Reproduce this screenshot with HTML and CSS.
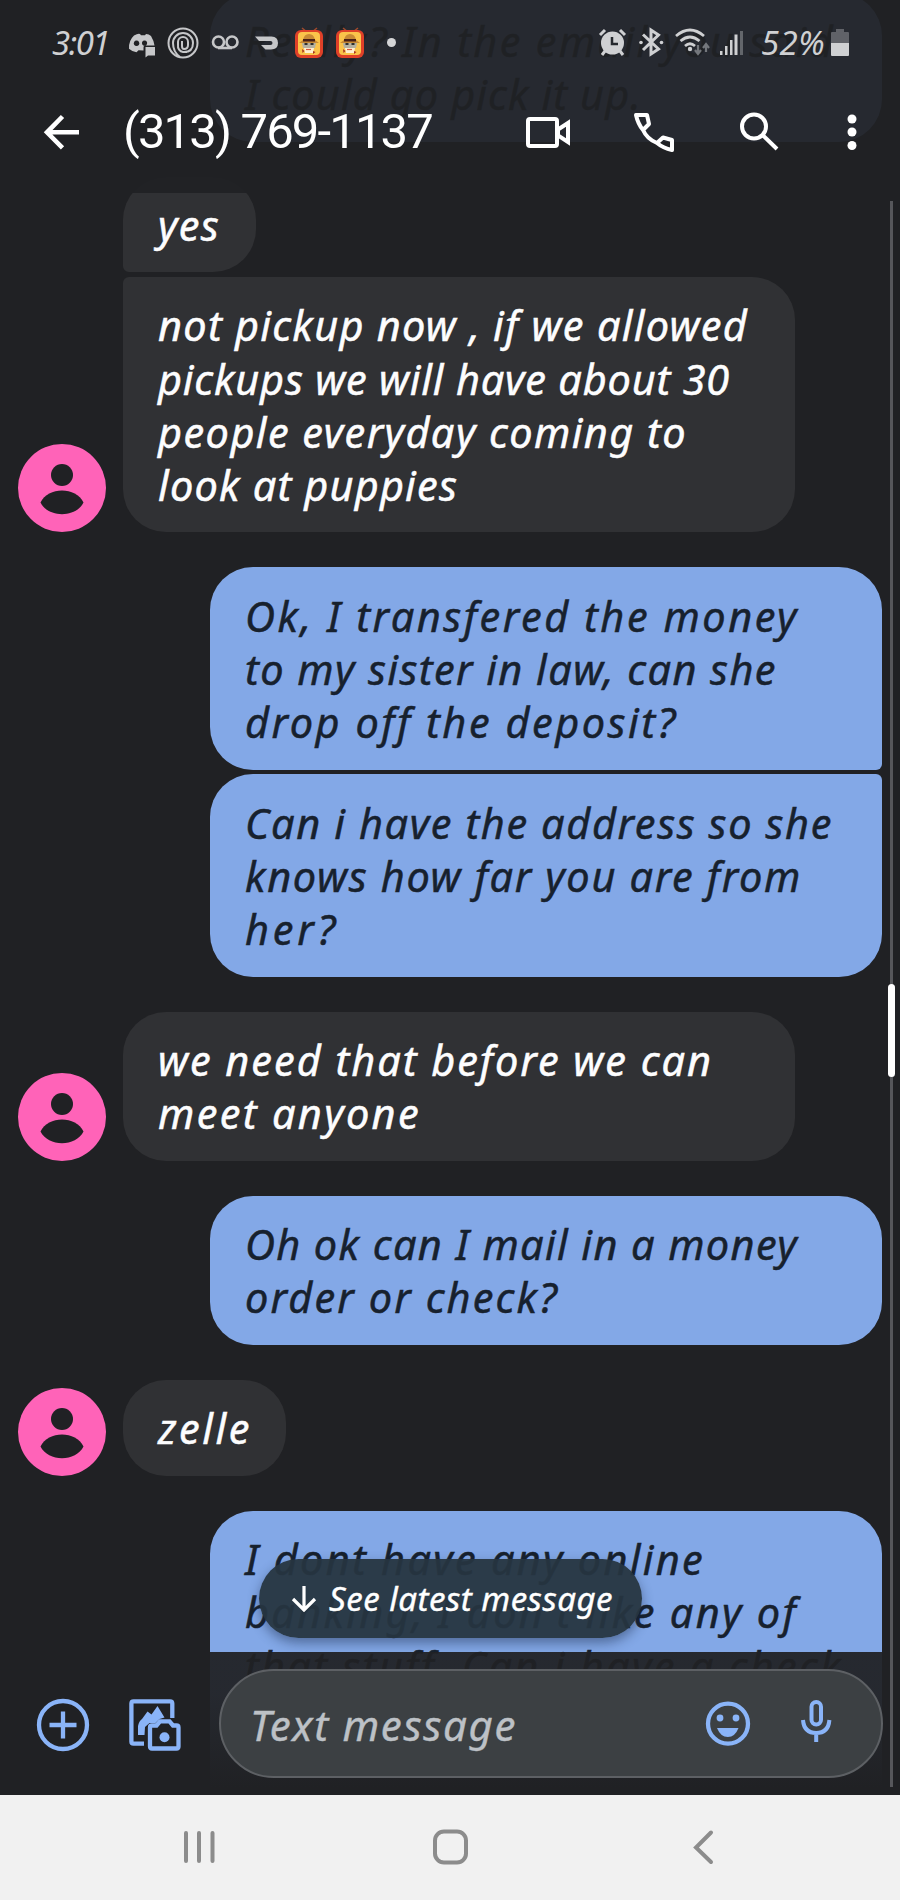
FILE: index.html
```html
<!DOCTYPE html>
<html lang="en">
<head>
<meta charset="utf-8">
<title>Messages</title>
<link rel="stylesheet" href="styles.css">
</head>
<body>
<svg class="defs" aria-hidden="true">
  <symbol id="person" viewBox="0 0 88 88"><circle cx="44" cy="44" r="44" fill="#ff63b8"/><circle cx="44" cy="31" r="11"/><path d="M22.500 58.500C30 42.500 58 42.500 65.500 58.500C58 74 30 74 22.500 58.500Z"/></symbol>
  <symbol id="fox" viewBox="0 0 30 32"><path d="M8 1l5 4M23 1l-5 4" stroke="#a34a2c" stroke-width="1.500"/><rect x="1" y="3" width="28" height="28" rx="6" fill="#df4028"/><rect x="4" y="5" width="22" height="23" rx="4" fill="#fbc34a"/><path d="M9 13Q10 7 15 7t6 6l4 3H5Z" fill="#c98a35"/><path d="M9 12h12v2.500H9z" fill="#4a2016"/><path d="M8 16h14l-1 5H9z" fill="#b5b0a0"/><path d="M10.500 16h3v2h-3zm6 0h3v2h-3z" fill="#30302e"/><path d="M10 21h10l-1 5h-8z" fill="#fff0d2"/><path d="M8 22l2.500 2-2 2zM19 24l2.500 1-2.500 2z" fill="#a83222"/><path d="M12 22.500h5" stroke="#d65a40" stroke-width="1.200"/></symbol>
</svg>
<div class="phone">
  <main class="chat">
    <div class="row sent"><div class="bubble"><span data-w="590">Really? In the email you said</span><span data-w="397">I could go pick it up.</span></div></div>
    <div class="row received"><div class="avatar-space"></div><div class="bubble short tail-down"><span data-w="62">yes</span></div></div>
    <div class="row received grouped"><svg class="avatar"><use href="#person"/></svg><div class="bubble tail-up"><span data-w="590">not pickup now , if we allowed</span><span data-w="572">pickups we will have about 30</span><span data-w="529">people everyday coming to</span><span data-w="300">look at puppies</span></div></div>
    <div class="row sent"><div class="bubble tail-down"><span data-w="554">Ok, I transfered the money</span><span data-w="532">to my sister in law, can she</span><span data-w="433">drop off the deposit?</span></div></div>
    <div class="row sent grouped"><div class="bubble tail-up"><span data-w="588">Can i have the address so she</span><span data-w="557">knows how far you are from</span><span data-w="94">her?</span></div></div>
    <div class="row received"><svg class="avatar"><use href="#person"/></svg><div class="bubble"><span data-w="555">we need that before we can</span><span data-w="263">meet anyone</span></div></div>
    <div class="row sent"><div class="bubble"><span data-w="553">Oh ok can I mail in a money</span><span data-w="314">order or check?</span></div></div>
    <div class="row received"><svg class="avatar"><use href="#person"/></svg><div class="bubble zelle"><span data-w="94">zelle</span></div></div>
    <div class="row sent"><div class="bubble last"><span data-w="460">I dont have any online</span><span data-w="553">banking, I don't like any of</span><span data-w="598">that stuff. Can i have a check</span></div></div>
  </main>

  <header class="top">
    <div class="status">
      <span class="clock" data-w="57">3:01</span>
      <svg class="notifications" viewBox="120 22 290 42">
        <path fill="#c6c7c9" d="M134 35.500q4-2.200 6-1.500l1 1.300h4l1-1.300q3 0 5 2q3 5 3.500 9.500h-9.500q-1.500 0-1.500 2v3l-5-.3-2 2q-5-1-7.500-3.500q-.5-8 5-13.200ZM136.500 40.500a2.800 2.800 0 1 0 .1 0M144.500 40.500a2.600 2.600 0 1 0 .1 0" fill-rule="evenodd"/><path fill="#c6c7c9" d="M145.500 47h9.500v8.500h-7l-2.500 2z"/>
        <g fill="none" stroke="#c6c7c9" stroke-width="2"><circle cx="183" cy="43" r="14.500"/><path d="M180 57Q173 52 173 43a10 10 0 0 1 20 0q0 9-9 9"/><path d="M187 52h-4a5.500 6 0 0 1-5-7v-3a5 5 0 0 1 10 0v3q0 4-4 4q-2 0-2-3v-5"/></g>
        <g fill="none" stroke="#c6c7c9" stroke-width="2.600"><circle cx="218.500" cy="42" r="5.500"/><circle cx="232" cy="42" r="5.500"/><path d="M218 48h14"/></g>
        <path fill="#c6c7c9" d="M255 36.500h16.500q6.500 0 6.500 6.500t-7 6.500h-5.500l-4.500-4.500h9.500q2 0 2-2t-2-2h-11.500z"/>
        <use href="#fox" x="294" y="27" width="30" height="32"/><use href="#fox" x="335" y="27" width="30" height="32"/>
        <circle cx="391.500" cy="42.500" r="4.500" fill="#d4d5d7"/>
      </svg>
      <svg class="signals" viewBox="596 22 150 42">
        <circle cx="612.500" cy="43" r="11.500" fill="#cfd0d2"/><path d="M600 35l5-5M620 30l5 5M605 51l-3 4M620 51l3 4" stroke="#cfd0d2" stroke-width="3"/><path d="M612 37v7h6" stroke="#25282d" stroke-width="2.500" fill="none"/>
        <path d="M643 34.500l15.500 14.500-7.500 5V30l7.500 5L643 50" fill="none" stroke="#cfd0d2" stroke-width="3"/><circle cx="641" cy="42.500" r="1.800" fill="#cfd0d2"/><circle cx="661.500" cy="42.500" r="1.800" fill="#cfd0d2"/>
        <g fill="none" stroke="#cfd0d2" stroke-width="2.700"><path d="M676 36q14-12 28 0M680.500 41q9.500-8 19 0M685 46q5-4.500 10 0"/></g><circle cx="690" cy="49" r="2.200" fill="#cfd0d2"/><path d="M698 45v9m-3-4 3 4 3-4M706 52v-8m-3 4 3-4 3 4" fill="none" stroke="#74777c" stroke-width="2.200"/>
        <path fill="#cfd0d2" d="M720 51h2.500v4H720zM725 46h2.500v9H725zM730 40h2.500v15H730zM734.500 34.500h3v20.500h-3z"/><path fill="#63666b" d="M740 31h3v24h-3z"/>
      </svg>
      <span class="percent" data-w="64">52%</span>
      <svg class="battery" viewBox="0 0 18 28"><path fill="#606268" d="M5 0h8v3h4q1 0 1 1v10H0V4q0-1 1-1h4z"/><path fill="#cfd0d2" d="M0 14h18v12q0 1-1 1H1q-1 0-1-1z"/></svg>
    </div>
    <div class="toolbar">
      <svg class="back" viewBox="42 112 40 40"><path d="M79 132.300H48M62.500 116.500 47 132.300l15.500 15.500"/></svg>
      <h1 data-w="309">(313) 769-1137</h1>
      <svg class="video" viewBox="524 110 48 42"><rect x="528" y="118" width="29" height="27" rx="2"/><path d="M558 128.500l10-6.500v19l-10-6.500z"/></svg>
      <svg class="call" viewBox="632 108 44 46"><path d="M636 114h11l2 9-6 6q-5-6-7-15ZM672 149v-10l-9-2.500-6 5.500q6 5 15 7ZM643 129q4 9 14 13"/></svg>
      <svg class="search" viewBox="738 108 44 46"><circle cx="754" cy="125.500" r="12"/><path d="M763 134.500l14 13.500"/></svg>
      <svg class="more" viewBox="842 110 20 44"><circle cx="852" cy="119" r="4.500"/><circle cx="852" cy="132" r="4.500"/><circle cx="852" cy="145.500" r="4.500"/></svg>
    </div>
  </header>

  <button class="latest"><svg viewBox="0 0 26 26"><path d="M13 0v23M2 13l11 11 11-11"/></svg><span data-w="284">See latest message</span></button>

  <footer class="compose">
    <svg class="plus" viewBox="36 1698 54 54"><circle cx="63" cy="1725" r="24"/><path d="M49.500 1725h27M63 1711.500v27"/></svg>
    <svg class="gallery" viewBox="126 1696 58 58"><path class="line" d="M172.300 1718v-14.500q0-2.200-2.200-2.200h-36.500q-2.200 0-2.200 2.200v38q0 2.200 2.200 2.200h10.400"/><path d="M138 1735v-9q1-5 4-7l5.500-7.500 4 3 6-8.500 7 11.500-5 1.500-4 4h-6l-4.500 4-.5 8z"/><path class="line" d="M150 1727.500q0-2 2-2h4.500l3.500-4.200h9.500l3.500 4.200h3.500q2 0 2 2v19q0 2-2 2h-24.500q-2 0-2-2z"/><circle cx="164.500" cy="1737.300" r="5"/></svg>
    <div class="field">
      <span class="hint" data-w="267">Text message</span>
      <svg class="smile" viewBox="704 1700 48 48"><circle cx="728" cy="1723.700" r="20"/><circle class="fill" cx="720" cy="1718" r="3.400"/><circle class="fill" cx="736" cy="1718" r="3.400"/><path class="fill" d="M717 1728h21.500q-3.500 9-10.700 9t-10.800-9z"/></svg>
      <svg class="mic" viewBox="798 1698 36 46"><rect x="811.500" y="1702" width="9.500" height="22.500" rx="4.700"/><path d="M803 1720q1 13 13.200 13t13.200-13M816.200 1733v9"/></svg>
    </div>
  </footer>
  <div class="track"></div><div class="thumb"></div>

  <nav class="system">
    <svg viewBox="0 0 36 36"><path d="M4 4v28M17 4v28M30.500 4v28"/></svg>
    <svg viewBox="0 0 36 36"><rect x="2" y="2.500" width="31" height="31" rx="9"/></svg>
    <svg viewBox="0 0 36 36"><path d="M27 3.500 12 18.500 27 33"/></svg>
  </nav>
</div>
<script src="fit.js"></script>
</body>
</html>
```
FILE: styles.css
```css
* { box-sizing: border-box; }
body { margin: 0; background: #202124; }
.defs { position: absolute; width: 0; height: 0; }
.phone { position: relative; width: 900px; height: 1900px; overflow: hidden; display: flex; flex-direction: column; background: #202124; font-family: "Noto Sans", "Open Sans", sans-serif; font-style: italic; color: #fdfdfe; }
svg { display: block; flex: none; fill: none; }
[data-w] { white-space: nowrap; }

.chat { height: 1795px; flex: none; overflow: hidden; padding: 0 18px 0 17.500px; }
.row { display: flex; align-items: flex-end; margin-top: 35px; }
.row:first-child { margin-top: -7.500px; }
.row.grouped { margin-top: 4.500px; }
.row.sent { justify-content: flex-end; }
.row.received { gap: 17.500px; }
.avatar, .avatar-space { width: 88px; height: 88px; fill: #202124; }
.bubble { width: 672px; padding: 22.500px 35px 20.200px; border-radius: 43px; background: #303134; font-size: 41.500px; line-height: 53.200px; -webkit-text-stroke: .5px currentColor; }
.bubble span { display: block; width: max-content; }
.bubble.short { width: 133px; }
.bubble.zelle { width: 163px; }
.bubble.last { height: 320px; }
.sent .bubble { background: #83a8e7; color: #17212e; }
.received .tail-down { border-bottom-left-radius: 6px; }
.received .tail-up { border-top-left-radius: 6px; }
.sent .tail-down { border-bottom-right-radius: 6px; }
.sent .tail-up { border-top-right-radius: 6px; }

.top { position: absolute; inset: 0 0 auto; height: 193px; background: rgba(32, 33, 36, .94); }
.status { height: 86px; display: flex; align-items: center; padding-left: 52px; color: #cfd0d2; font-size: 33px; line-height: 40px; }
.clock { width: 68px; }
.notifications { width: 290px; height: 42px; }
.signals { width: 150px; height: 42px; margin-left: 186px; }
.percent { width: 64px; margin-left: 15px; }
.battery { width: 18px; height: 28px; margin-left: 6px; }
.toolbar { height: 92px; display: flex; align-items: center; padding-left: 42px; stroke: #fff; stroke-width: 4; }
.toolbar h1 { width: 311px; margin: 0 0 0 41px; font: 400 49px/60px Roboto, "Open Sans", sans-serif; color: #fff; }
.back { width: 40px; height: 40px; stroke-width: 4.600; }
.video { width: 48px; height: 42px; margin-left: 90px; }
.call { width: 44px; height: 46px; margin-left: 60px; stroke-linejoin: round; }
.search { width: 44px; height: 46px; margin-left: 62px; }
.more { width: 20px; height: 44px; margin-left: 60px; fill: #fff; stroke: none; }

.latest { position: absolute; left: 259px; top: 1559px; width: 383px; height: 79px; display: flex; align-items: center; gap: 12px; padding: 0 0 0 32px; border: 0; border-radius: 40px; background: rgba(38, 53, 64, .95); box-shadow: 0 5px 12px rgba(20, 35, 65, .45); color: #fff; font: italic 33px/48px "Noto Sans", "Open Sans", sans-serif; -webkit-text-stroke: .4px currentColor; }
.latest svg { width: 26px; height: 26px; stroke: #fff; stroke-width: 3.200; }

.compose { position: absolute; left: 0; right: 0; top: 1652px; height: 143px; display: flex; align-items: center; padding-left: 36px; background: linear-gradient(rgba(32, 33, 36, .94) 30%, #202124 95%); stroke: #8ab4f8; stroke-width: 4.300; }
.plus { width: 54px; height: 54px; margin-top: 3px; }
.gallery { width: 58px; height: 58px; margin-left: 36px; margin-top: 3px; fill: #8ab4f8; stroke: none; }
.gallery .line { fill: none; stroke: #8ab4f8; }
.field { width: 664px; height: 109px; margin-left: 35px; display: flex; align-items: center; padding-left: 29px; border: 2px solid #5d6064; border-radius: 55px; background: #3c4043; }
.hint { width: 268px; padding-top: 2px; font-size: 42px; line-height: 54px; color: #bdc1c6; -webkit-text-stroke: .4px currentColor; }
.smile { width: 48px; height: 48px; margin-left: 186px; }
.smile .fill { fill: #8ab4f8; stroke: none; }
.mic { width: 36px; height: 46px; margin-left: 46px; margin-top: -6px; stroke-width: 4; }

.track { position: absolute; left: 890px; top: 201px; width: 3px; height: 1586px; background: #56575b; }
.thumb { position: absolute; left: 888px; top: 984px; width: 7px; height: 93px; border-radius: 4px; background: #fff; }

.system { height: 105px; flex: none; display: flex; align-items: center; gap: 215px; padding-left: 182px; padding-bottom: 2px; background: #f1f1f1; stroke: #8c8c8c; stroke-width: 4; stroke-linecap: round; }
.system svg { width: 36px; height: 36px; }
```
FILE: fit.js
```js
// Tracks each line of text so that it fills its intended width.
document.querySelectorAll('[data-w]').forEach(function (el) {
  var range = document.createRange();
  range.selectNodeContents(el);
  var natural = range.getBoundingClientRect().width;
  el.style.letterSpacing = ((el.dataset.w - natural) / el.textContent.length).toFixed(3) + 'px';
});
```
